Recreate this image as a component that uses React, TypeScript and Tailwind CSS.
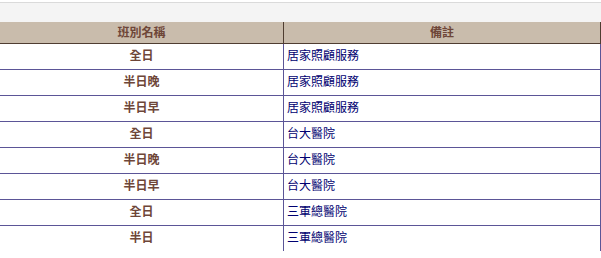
const rows = [
  { shift: "全日", note: "居家照顧服務" },
  { shift: "半日晚", note: "居家照顧服務" },
  { shift: "半日早", note: "居家照顧服務" },
  { shift: "全日", note: "台大醫院" },
  { shift: "半日晚", note: "台大醫院" },
  { shift: "半日早", note: "台大醫院" },
  { shift: "全日", note: "三軍總醫院" },
  { shift: "半日", note: "三軍總醫院" },
];

export default function App() {
  return (
    <div
      className="w-[601px] h-[258px] bg-white overflow-hidden text-[12px] leading-none"
      style={{ fontFamily: '"Noto Sans CJK TC", "Noto Sans CJK SC", sans-serif' }}
    >
      <div className="mt-[2px] h-[20px] border-t border-[#dadada] bg-[#f4f4f4]" />
      <div className="grid grid-cols-[284px_1fr] h-[22px] bg-[#c9bcac] border-b border-[#4f3d31] text-[#6e4638] font-bold">
        <div className="flex items-center justify-center pb-[2px] border-r border-[#4f3d31]">班別名稱</div>
        <div className="flex items-center justify-center pb-[2px] border-r border-[#4f3d31]">備註</div>
      </div>
      {rows.map((r, i) => (
        <div
          key={i}
          className={
            i < rows.length - 1
              ? "grid grid-cols-[284px_1fr] h-[26px] border-b border-[#5b5597]"
              : "grid grid-cols-[284px_1fr] h-[25px]"
          }
        >
          <div className="flex items-center justify-center pb-[4px] border-r border-[#5b5597] font-bold text-[#6e4638]">
            {r.shift}
          </div>
          <div className="flex items-center pl-[3px] pb-[4px] border-r border-[#5b5597] text-[#000070]">{r.note}</div>
        </div>
      ))}
    </div>
  );
}
